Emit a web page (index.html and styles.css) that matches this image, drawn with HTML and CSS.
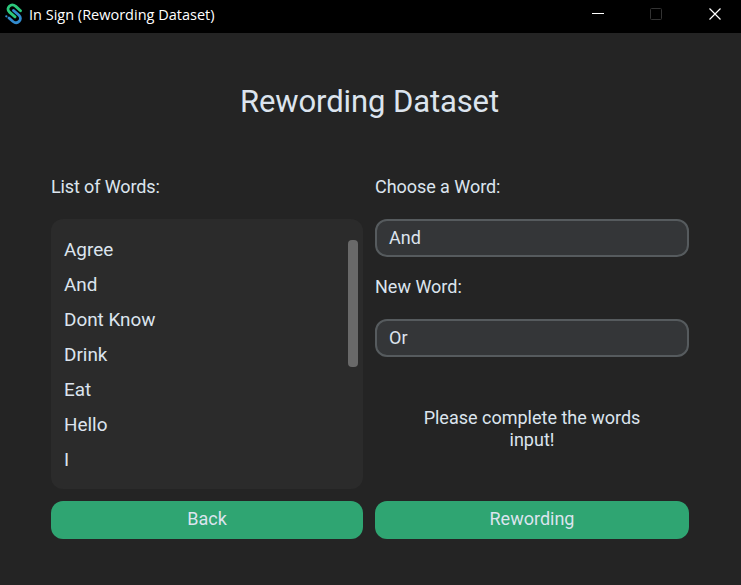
FILE: index.html
```html
<!DOCTYPE html>
<html lang="en">
<head>
<meta charset="utf-8">
<title>In Sign (Rewording Dataset)</title>
<link rel="stylesheet" href="styles.css">
</head>
<body>
<header class="titlebar">
  <svg class="logo" viewBox="0 0 20 22" width="20" height="22" fill="none" stroke-width="2.8" stroke-linecap="round">
    <path stroke="#328bcf" d="M9.500 7.500 15 12.300c4 4-1.500 9.700-6 6.200L5 15"/>
    <path stroke="#328bcf" stroke-width="2.200" d="M2.300 13.300h.1"/>
    <path stroke="#2cc87c" d="M16.500 7.800 11.800 3.400C7-.6 1.500 5 5.200 8.900l5.800 5"/>
  </svg>
  <span class="caption">In Sign (Rewording Dataset)</span>
  <div class="controls">
    <svg width="13" height="13" viewBox="0 0 13 13"><path d="M1 5.500h12" stroke="#fff"/></svg>
    <svg width="13" height="13" viewBox="0 0 13 13"><rect x=".5" y=".5" width="11" height="11" rx="1" fill="none" stroke="#333"/></svg>
    <svg width="13" height="13" viewBox="0 0 13 13"><path d="M.5.500l11 11M11.500.500l-11 11" stroke="#fff" stroke-width="1.200"/></svg>
  </div>
</header>
<main class="window">
  <h1 class="heading">Rewording Dataset</h1>
  <div class="columns">
    <section class="column">
      <div class="label label-list">List of Words:</div>
      <div class="list">
        <ul class="words">
          <li>Agree</li><li>And</li><li>Dont Know</li><li>Drink</li><li>Eat</li><li>Hello</li><li>I</li>
        </ul>
        <div class="scrollbar"></div>
      </div>
      <button class="button">Back</button>
    </section>
    <section class="column">
      <div class="label label-choose">Choose a Word:</div>
      <div class="entry">And</div>
      <div class="label label-new">New Word:</div>
      <div class="entry">Or</div>
      <p class="message">Please complete the words<br>input!</p>
      <button class="button">Rewording</button>
    </section>
  </div>
</main>
</body>
</html>
```
FILE: styles.css
```css
* { box-sizing: border-box; }
body {
  margin: 0;
  height: 585px;
  overflow: hidden;
  background: #242424;
  color: #dce4ee;
  font: 18px/22px Roboto, sans-serif;
}
.titlebar {
  height: 33px;
  display: flex;
  align-items: flex-start;
  padding: 3px 19px 0 4px;
  background: #000;
  color: #fff;
}
.logo { flex: none; }
.caption {
  margin: 1px 0 0 5px;
  font: 14.500px/22px "Open Sans", sans-serif;
  white-space: nowrap;
}
.controls {
  display: flex;
  gap: 46px;
  margin: 5px 0 0 auto;
}
.controls svg { display: block; }
.heading {
  margin: 0;
  padding: 49px 2px 0 0;
  height: 143px;
  font-size: 31px;
  line-height: 40px;
  font-weight: 400;
  letter-spacing: -0.110px;
  text-align: center;
}
.columns {
  display: grid;
  grid-template-columns: 312px 314px;
  column-gap: 12px;
  padding-left: 51px;
}
.column {
  display: flex;
  flex-direction: column;
  height: 363px;
}
.label { height: 43px; }
.label-list { letter-spacing: -0.120px; }
.label-choose { letter-spacing: -0.050px; }
.label-new { margin-top: 19px; }
.list {
  display: flex;
  justify-content: space-between;
  height: 270px;
  padding: 21px 5px 0 13px;
  border-radius: 12px;
  background: #2b2b2b;
}
.words {
  margin: -8px 0 0;
  padding: 0;
  list-style: none;
  font-size: 18.900px;
  line-height: 35px;
}
.scrollbar {
  width: 10px;
  height: 127px;
  border-radius: 4px;
  background: #696969;
}
.entry {
  height: 38px;
  padding: 6px 12px;
  border: 2px solid #565b5e;
  border-radius: 12px;
  background: #343638;
}
.message {
  margin: 50px 0 0;
  text-align: center;
}
.button {
  height: 38px;
  margin-top: auto;
  padding: 0 0 2px;
  border: 0;
  border-radius: 12px;
  background: #2fa572;
  color: #dce4ee;
  font: inherit;
}
```
